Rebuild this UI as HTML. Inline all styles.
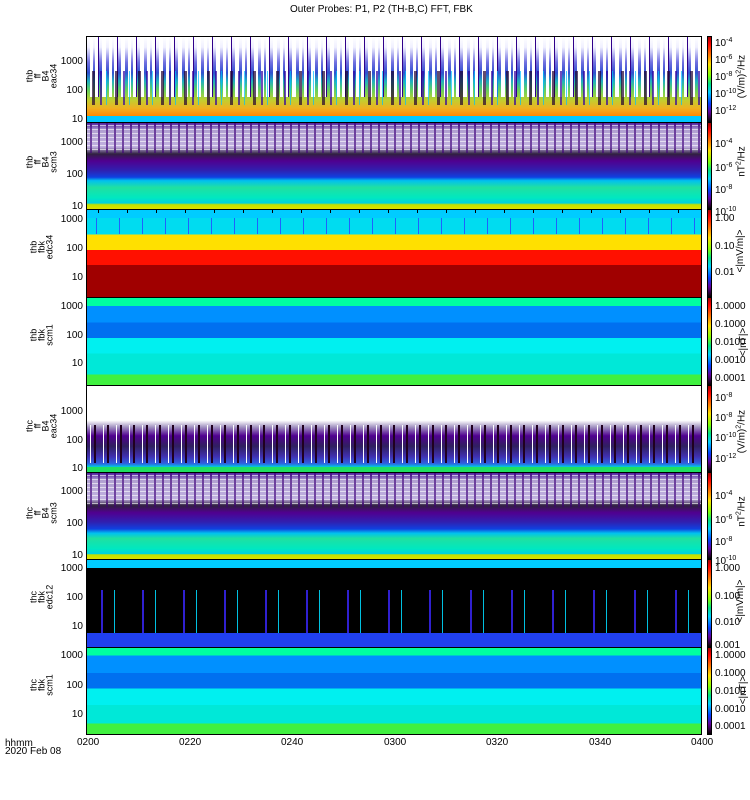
<!DOCTYPE html>
<html><head><meta charset="utf-8"><style>
*{margin:0;padding:0;box-sizing:border-box}
body{width:750px;height:800px;background:#fff;position:relative;overflow:hidden;font-family:"Liberation Sans",sans-serif;font-size:10px;color:#000}
.p{position:absolute;left:86px;width:616px;border:1px solid #000;overflow:hidden}
.l{position:absolute;left:0;width:100%}
.cb{position:absolute;left:707px;width:5px;border:1px solid #000;background:linear-gradient(#a00000,#ff0000 8%,#ff8000 22%,#ffe000 32%,#80ff00 45%,#00e080 55%,#00d0ff 65%,#0040ff 78%,#6000a0 88%,#200020 97%,#000)}
.y{position:absolute;right:667px;font-size:10px;line-height:10px}
.t{position:absolute;font-size:10px;line-height:10px;white-space:nowrap}
.side{position:absolute;width:87px;text-align:center;transform:rotate(-90deg);font-size:9px;line-height:8px}
.unit{position:absolute;width:100px;left:691px;text-align:center;transform:rotate(-90deg);white-space:nowrap;font-size:10px;line-height:10px}
sup{font-size:7px;vertical-align:4px}
</style></head><body>
<div class="t" style="left:290px;top:5px">Outer Probes: P1, P2 (TH-B,C) FFT, FBK</div>

<!-- panel1 -->
<div class="p" style="top:36px;height:87px;background:linear-gradient(#fff,#f0f0ff 12%,#7070e0 30%,#3050d0 42%,#20b0c0 52%,#60d060 62%,#c0d030 74%,#f0b020 84%,#ff8800 93%,#00c8ff 93%)">
<div class="l" style="top:0;height:70%;background:repeating-linear-gradient(90deg,transparent 0 3px,#fff 3px 6px,transparent 6px 8px,#fff 8px 11px,#30008a 11px 12px,transparent 12px 15px,#fff 15px 19px)"></div>
<div class="l" style="top:40%;height:40%;background:repeating-linear-gradient(90deg,transparent 0 5px,#200030 5px 8px,transparent 8px 13px,#3000a0 13px 15px,transparent 15px 19px,#00c0ff 19px 20px,transparent 20px 23px);opacity:.7"></div>
</div>
<!-- panel2 -->
<div class="p" style="top:122px;height:88px;background:linear-gradient(#5020a0,#b0a0d0 8%,#c0b0e0 28%,#302040 36%,#500090 44%,#3020b0 55%,#1040e0 63%,#00c0f0 67%,#20e0a0 75%,#00e8c0 87%,#00d0e0 93%,#c0e000 95%,#e0e000)">
<div class="l" style="top:0;height:35%;background:repeating-linear-gradient(90deg,transparent 0 3px,#40007a 3px 5px,transparent 5px 8px),repeating-linear-gradient(0deg,transparent 0 3px,#fff 3px 4px);opacity:.6"></div>
</div>
<!-- panel3 -->
<div class="p" style="top:209px;height:89px;background:linear-gradient(#00ccff,#00ccff 9%,#00dcf0 9%,#00dcf0 28%,#ffe000 28%,#ffe000 46%,#ff1000 46%,#ff1000 63%,#a00000 63%)">
<div class="l" style="top:9%;height:19%;background:repeating-linear-gradient(90deg,transparent 0 9px,#2060ff 9px 10px,transparent 10px 23px)"></div>
<div class="l" style="top:0;height:4%;background:repeating-linear-gradient(90deg,transparent 0 11px,#000 11px 12px,transparent 12px 29px)"></div>
</div>
<!-- panel4 -->
<div class="p" style="top:297px;height:89px;background:linear-gradient(#00ffa0,#00ffa0 9%,#0090ff 9%,#0090ff 28%,#0070f0 28%,#0070f0 46%,#00f0f0 46%,#00f0f0 64%,#00e8d8 64%,#00e8d8 88%,#40f040 88%)"></div>
<!-- panel5 -->
<div class="p" style="top:385px;height:88px;background:linear-gradient(#fff,#fff 40%,#a090c0 48%,#500090 58%,#302060 70%,#4030b0 82%,#3060e0 90%,#00c8e0 94%,#20e060 94%)">
<div class="l" style="top:45%;height:45%;background:repeating-linear-gradient(90deg,transparent 0 3px,#fff 3px 4px,transparent 4px 7px,#200020 7px 9px,transparent 9px 13px)"></div>
</div>
<!-- panel6 -->
<div class="p" style="top:472px;height:88px;background:linear-gradient(#5020a0,#b0a0d0 8%,#c0b0e0 30%,#302040 38%,#500090 46%,#3020b0 57%,#1040e0 65%,#00c0f0 70%,#20e0a0 76%,#00e8c0 88%,#00d0e0 94%,#c0e000 95%,#e0e000)">
<div class="l" style="top:0;height:40%;background:repeating-linear-gradient(90deg,transparent 0 3px,#40007a 3px 5px,transparent 5px 8px),repeating-linear-gradient(0deg,transparent 0 3px,#fff 3px 4px);opacity:.6"></div>
</div>
<!-- panel7 -->
<div class="p" style="top:559px;height:89px;background:linear-gradient(#00ccff,#00ccff 9%,#000 9%,#000 84%,#2040f0 84%)">
<div class="l" style="top:35%;height:49%;background:repeating-linear-gradient(90deg,transparent 0 14px,#3020d0 14px 16px,transparent 16px 27px,#00c0e0 27px 28px,transparent 28px 41px)"></div>
</div>
<!-- panel8 -->
<div class="p" style="top:647px;height:88px;background:linear-gradient(#00ffa0,#00ffa0 9%,#0090ff 9%,#0090ff 29%,#0070f0 29%,#0070f0 47%,#00f0f0 47%,#00f0f0 66%,#00e8d8 66%,#00e8d8 88%,#40f040 88%)"></div>

<!-- colorbars -->
<div class="cb" style="top:36px;height:87px"></div>
<div class="cb" style="top:122px;height:88px"></div>
<div class="cb" style="top:209px;height:89px"></div>
<div class="cb" style="top:297px;height:89px"></div>
<div class="cb" style="top:385px;height:88px"></div>
<div class="cb" style="top:472px;height:88px"></div>
<div class="cb" style="top:559px;height:89px"></div>
<div class="cb" style="top:647px;height:88px"></div>

<!-- colorbar labels -->
<div class="t" style="left:715px;top:36px">10<sup>-4</sup></div>
<div class="t" style="left:715px;top:53px">10<sup>-6</sup></div>
<div class="t" style="left:715px;top:70px">10<sup>-8</sup></div>
<div class="t" style="left:715px;top:87px">10<sup>-10</sup></div>
<div class="t" style="left:715px;top:104px">10<sup>-12</sup></div>
<div class="unit" style="top:70px">(V/m)<sup>2</sup>/Hz</div>
<div class="t" style="left:715px;top:137px">10<sup>-4</sup></div>
<div class="t" style="left:715px;top:161px">10<sup>-6</sup></div>
<div class="t" style="left:715px;top:183px">10<sup>-8</sup></div>
<div class="t" style="left:715px;top:205px">10<sup>-10</sup></div>
<div class="unit" style="top:155px">nT<sup>2</sup>/Hz</div>
<div class="t" style="left:715px;top:214px">1.00</div>
<div class="t" style="left:715px;top:242px">0.10</div>
<div class="t" style="left:715px;top:268px">0.01</div>
<div class="unit" style="top:246px">&lt;|mV/m|&gt;</div>
<div class="t" style="left:715px;top:302px">1.0000</div>
<div class="t" style="left:715px;top:320px">0.1000</div>
<div class="t" style="left:715px;top:338px">0.0100</div>
<div class="t" style="left:715px;top:356px">0.0010</div>
<div class="t" style="left:715px;top:374px">0.0001</div>
<div class="unit" style="top:337px;left:694px">&lt;|nT|&gt;</div>
<div class="t" style="left:715px;top:391px">10<sup>-8</sup></div>
<div class="t" style="left:715px;top:411px">10<sup>-8</sup></div>
<div class="t" style="left:715px;top:431px">10<sup>-10</sup></div>
<div class="t" style="left:715px;top:452px">10<sup>-12</sup></div>
<div class="unit" style="top:425px">(V/m)<sup>2</sup>/Hz</div>
<div class="t" style="left:715px;top:489px">10<sup>-4</sup></div>
<div class="t" style="left:715px;top:513px">10<sup>-6</sup></div>
<div class="t" style="left:715px;top:535px">10<sup>-8</sup></div>
<div class="t" style="left:715px;top:554px">10<sup>-10</sup></div>
<div class="unit" style="top:505px">nT<sup>2</sup>/Hz</div>
<div class="t" style="left:715px;top:564px">1.000</div>
<div class="t" style="left:715px;top:592px">0.100</div>
<div class="t" style="left:715px;top:618px">0.010</div>
<div class="t" style="left:715px;top:641px">0.001</div>
<div class="unit" style="top:596px">&lt;|mV/m|&gt;</div>
<div class="t" style="left:715px;top:651px">1.0000</div>
<div class="t" style="left:715px;top:669px">0.1000</div>
<div class="t" style="left:715px;top:687px">0.0100</div>
<div class="t" style="left:715px;top:705px">0.0010</div>
<div class="t" style="left:715px;top:722px">0.0001</div>
<div class="unit" style="top:685px;left:694px">&lt;|nT|&gt;</div>

<!-- y labels -->
<div class="y" style="top:57px">1000</div><div class="y" style="top:86px">100</div><div class="y" style="top:115px">10</div>
<div class="y" style="top:138px">1000</div><div class="y" style="top:170px">100</div><div class="y" style="top:202px">10</div>
<div class="y" style="top:215px">1000</div><div class="y" style="top:244px">100</div><div class="y" style="top:273px">10</div>
<div class="y" style="top:302px">1000</div><div class="y" style="top:331px">100</div><div class="y" style="top:359px">10</div>
<div class="y" style="top:407px">1000</div><div class="y" style="top:436px">100</div><div class="y" style="top:464px">10</div>
<div class="y" style="top:487px">1000</div><div class="y" style="top:519px">100</div><div class="y" style="top:551px">10</div>
<div class="y" style="top:564px">1000</div><div class="y" style="top:593px">100</div><div class="y" style="top:622px">10</div>
<div class="y" style="top:651px">1000</div><div class="y" style="top:681px">100</div><div class="y" style="top:710px">10</div>

<!-- side labels -->
<div class="side" style="left:-2px;top:60px">thb<br>ff<br>B4<br>eac34</div>
<div class="side" style="left:-2px;top:146px">thb<br>ff<br>B4<br>scm3</div>
<div class="side" style="left:-2px;top:235px">thb<br>fbk<br>edc34</div>
<div class="side" style="left:-2px;top:323px">thb<br>fbk<br>scm1</div>
<div class="side" style="left:-2px;top:410px">thc<br>ff<br>B4<br>eac34</div>
<div class="side" style="left:-2px;top:497px">thc<br>ff<br>B4<br>scm3</div>
<div class="side" style="left:-2px;top:585px">thc<br>fbk<br>edc12</div>
<div class="side" style="left:-2px;top:673px">thc<br>fbk<br>scm1</div>

<!-- x axis -->
<div class="t" style="left:77px;top:738px">0200</div>
<div class="t" style="left:179px;top:738px">0220</div>
<div class="t" style="left:281px;top:738px">0240</div>
<div class="t" style="left:384px;top:738px">0300</div>
<div class="t" style="left:486px;top:738px">0320</div>
<div class="t" style="left:589px;top:738px">0340</div>
<div class="t" style="left:691px;top:738px">0400</div>
<div class="t" style="left:5px;top:739px">hhmm</div>
<div class="t" style="left:5px;top:747px">2020 Feb 08</div>
</body></html>
